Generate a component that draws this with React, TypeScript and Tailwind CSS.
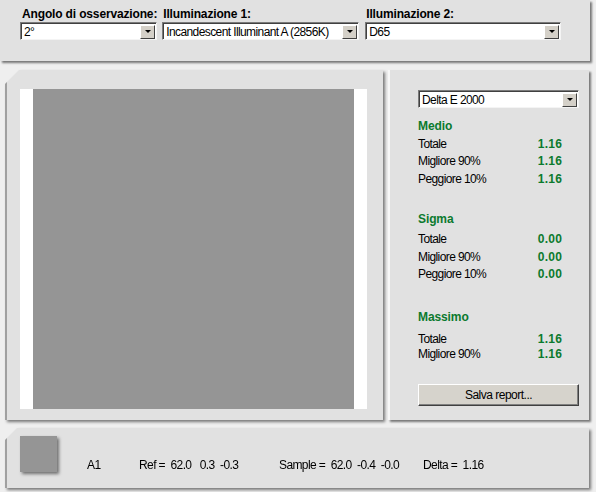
import React from 'react'

const font = { fontFamily: '"Liberation Sans", Arial, sans-serif' }

function Select({ value, width }: { value: string; width: string }) {
    return (
        <div className={`flex h-[18px] ${width} items-center border border-t-[#7a7a7a] border-l-[#7a7a7a] border-r-[#f4f4f4] border-b-[#f4f4f4] bg-white`}>
            <div className="flex h-full flex-1 items-center border-t border-l border-[#404040] pl-[2px] text-[12px] tracking-[-0.6px] text-black">
                {value}
            </div>
            <div className="flex h-full items-center border-t border-[#404040] pr-[1px]">
                <div className="flex h-[14px] w-[15px] items-center justify-center border border-t-white border-l-white border-r-[#404040] border-b-[#404040] bg-[#d4d0c8]">
                    <div className="h-0 w-0 border-x-[3px] border-t-[3px] border-x-transparent border-t-black" />
                </div>
            </div>
        </div>
    )
}

function Row({ label, value, h = 'h-[17.5px]' }: { label: string; value: string; h?: string }) {
    return (
        <div className={`flex ${h} items-center justify-between pr-[17px]`}>
            <span className="text-[12px] tracking-[-0.6px] text-black">{label}</span>
            <span className="text-[12px] font-bold tracking-[0.2px] text-[#0b7a2e]">{value}</span>
        </div>
    )
}

function Heading({ children }: { children: React.ReactNode }) {
    return <div className="flex h-4 items-center text-[12px] font-bold tracking-[-0.1px] text-[#0b7a2e]">{children}</div>
}

export default function App() {
    return (
        <div className="h-[492px] w-[596px] overflow-hidden bg-[#efefef]" style={font}>
            {/* top bar */}
            <div className="h-[61px] w-[590px] bg-[#e1e1e1] shadow-[2px_2px_2px_rgba(0,0,0,0.5)]">
                <div className="flex gap-[5px] pl-[20px] pt-[5px]">
                    <div className="flex flex-col">
                        <div className="h-[17px] pl-[2px] text-[12px] font-bold tracking-[-0.15px] text-black">Angolo di osservazione:</div>
                        <Select value="2°" width="w-[137px]" />
                    </div>
                    <div className="flex flex-col">
                        <div className="h-[17px] pl-[1px] text-[12px] font-bold tracking-[-0.15px] text-black">Illuminazione 1:</div>
                        <Select value="Incandescent Illuminant A (2856K)" width="w-[197px]" />
                    </div>
                    <div className="flex flex-col pl-[1px]">
                        <div className="h-[17px] pl-[1px] text-[12px] font-bold tracking-[-0.15px] text-black">Illuminazione 2:</div>
                        <Select value="D65" width="w-[196px]" />
                    </div>
                </div>
            </div>

            {/* middle */}
            <div className="mt-[9px] flex gap-[5px] pl-[5px]">
                <div className="drop-shadow-[2px_2px_1.5px_rgba(0,0,0,0.5)]">
                    <div className="h-[350px] w-[378px] border-l-2 border-[#a0a0a0] bg-[#e1e1e1] pl-[13px] pt-[19px] [clip-path:polygon(14px_0,100%_0,100%_100%,0_100%,0_14px)]">
                        <div className="flex h-[320px] w-[347px] bg-white px-[13px]">
                            <div className="h-full flex-1 bg-[#959595]" />
                        </div>
                    </div>
                </div>

                <div className="h-[350px] w-[201px] border-l-2 border-[#f7f7f7] bg-[#e1e1e1] pl-[28px] pt-[20px] shadow-[2px_2px_2px_rgba(0,0,0,0.5)]">
                    <div className="w-[161px]">
                        <Select value="Delta E 2000" width="w-[161px]" />
                        <div className="mt-[10px]">
                            <Heading>Medio</Heading>
                            <div className="mt-[1px]">
                                <Row label="Totale" value="1.16" />
                                <Row label="Migliore 90%" value="1.16" />
                                <Row label="Peggiore 10%" value="1.16" />
                            </div>
                        </div>
                        <div className="mt-[23px]">
                            <Heading>Sigma</Heading>
                            <div className="mt-[4px]">
                                <Row label="Totale" value="0.00" />
                                <Row label="Migliore 90%" value="0.00" />
                                <Row label="Peggiore 10%" value="0.00" />
                            </div>
                        </div>
                        <div className="mt-[26px]">
                            <Heading>Massimo</Heading>
                            <div className="mt-[6px]">
                                <Row label="Totale" value="1.16" h="h-[15px]" />
                                <Row label="Migliore 90%" value="1.16" h="h-[15px]" />
                            </div>
                        </div>
                        <div className="mt-[23px] flex h-[22px] w-[161px] items-center justify-center border border-t-white border-l-white border-r-[#404040] border-b-[#404040] bg-[#d6d3cc] text-[12px] tracking-[-0.5px] text-black shadow-[inset_-1px_-1px_0_#808080]">
                            Salva report...
                        </div>
                    </div>
                </div>
            </div>

            {/* bottom */}
            <div className="mt-[8px] pl-[5px]">
                <div className="drop-shadow-[2px_2px_1.5px_rgba(0,0,0,0.5)]">
                    <div className="flex h-[60px] w-[584px] items-start border-l-2 border-[#a0a0a0] bg-[#e1e1e1] pl-[13px] pt-[8px] [clip-path:polygon(12px_0,100%_0,100%_100%,0_100%,0_12px)]">
                        <div className="h-[36px] w-[37px] bg-[#959595] shadow-[2px_2px_3px_rgba(0,0,0,0.5)]" />
                        <div className="flex pt-[20px] text-[12px] tracking-[-0.6px] text-black">
                            <span className="ml-[30px] w-[52px]">A1</span>
                            <span className="w-[140px] whitespace-pre">Ref =  62.0   0.3  -0.3</span>
                            <span className="w-[144px] whitespace-pre">Sample =  62.0  -0.4  -0.0</span>
                            <span className="whitespace-pre">Delta =  1.16</span>
                        </div>
                    </div>
                </div>
            </div>
        </div>
    )
}
